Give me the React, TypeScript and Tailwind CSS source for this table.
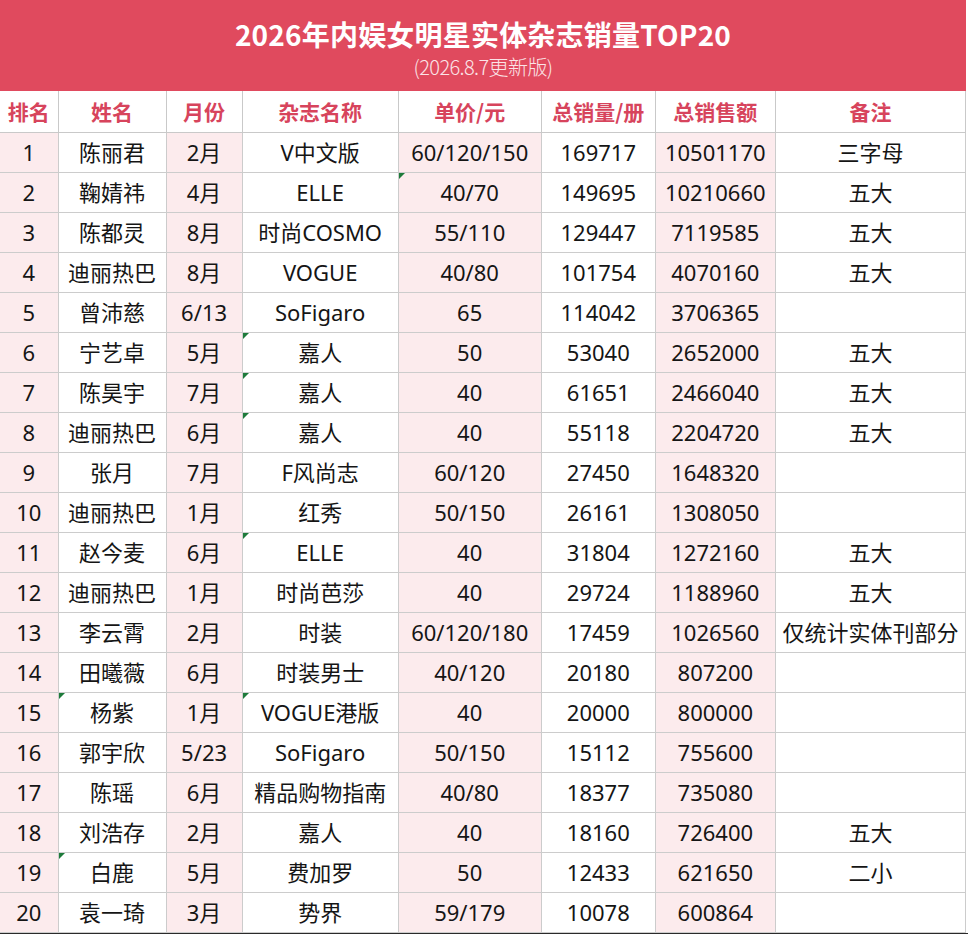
import React from "react";

// rank, name, month, magazine, price, copies, revenue, note, flagged columns
const rows: [string, string, string, string, string, string, string, string, number[]][] = [
    ["1", "陈丽君", "2月", "V中文版", "60/120/150", "169717", "10501170", "三字母", []],
    ["2", "鞠婧祎", "4月", "ELLE", "40/70", "149695", "10210660", "五大", [4]],
    ["3", "陈都灵", "8月", "时尚COSMO", "55/110", "129447", "7119585", "五大", []],
    ["4", "迪丽热巴", "8月", "VOGUE", "40/80", "101754", "4070160", "五大", []],
    ["5", "曾沛慈", "6/13", "SoFigaro", "65", "114042", "3706365", "", []],
    ["6", "宁艺卓", "5月", "嘉人", "50", "53040", "2652000", "五大", [3]],
    ["7", "陈昊宇", "7月", "嘉人", "40", "61651", "2466040", "五大", [3]],
    ["8", "迪丽热巴", "6月", "嘉人", "40", "55118", "2204720", "五大", [3]],
    ["9", "张月", "7月", "F风尚志", "60/120", "27450", "1648320", "", []],
    ["10", "迪丽热巴", "1月", "红秀", "50/150", "26161", "1308050", "", []],
    ["11", "赵今麦", "6月", "ELLE", "40", "31804", "1272160", "五大", [3]],
    ["12", "迪丽热巴", "1月", "时尚芭莎", "40", "29724", "1188960", "五大", []],
    ["13", "李云霄", "2月", "时装", "60/120/180", "17459", "1026560", "仅统计实体刊部分", []],
    ["14", "田曦薇", "6月", "时装男士", "40/120", "20180", "807200", "", []],
    ["15", "杨紫", "1月", "VOGUE港版", "40", "20000", "800000", "", [1, 3]],
    ["16", "郭宇欣", "5/23", "SoFigaro", "50/150", "15112", "755600", "", []],
    ["17", "陈瑶", "6月", "精品购物指南", "40/80", "18377", "735080", "", []],
    ["18", "刘浩存", "2月", "嘉人", "40", "18160", "726400", "五大", []],
    ["19", "白鹿", "5月", "费加罗", "50", "12433", "621650", "二小", [1]],
    ["20", "袁一琦", "3月", "势界", "59/179", "10078", "600864", "", []],
];

const headers = ["排名", "姓名", "月份", "杂志名称", "单价/元", "总销量/册", "总销售额", "备注"];
const widths = ["w-[58px]", "w-[108px]", "w-[76px]", "w-[156px]", "w-[143px]", "w-[114px]", "w-[120px]", "w-[190px]"];

export default function App() {
    return (
        <div className="w-[968px] h-[934px] bg-white overflow-hidden font-['Noto_Sans','Noto_Sans_CJK_SC',sans-serif]">
            <div className="w-[966px] h-[91px] bg-[#e04a5e] flex flex-col items-center">
                <h1 className="mt-[17px] text-[28px] leading-[34px] font-bold text-white tracking-[0.2px] font-['Noto_Sans_CJK_SC',sans-serif]">
                    2026年内娱女明星实体杂志销量TOP20
                </h1>
                <p className="mt-[4px] text-[20px] leading-[24px] text-[#fbe4e7] tracking-[-0.6px] font-light font-['Noto_Sans_CJK_SC',sans-serif]">
                    (2026.8.7更新版)
                </p>
            </div>

            <table className="table-fixed border-collapse w-[966px] text-[22px]">
                <thead>
                    <tr className="h-[41px]">
                        {headers.map((h, i) => (
                            <th
                                key={h}
                                className={`${widths[i]} border-r border-b border-[#c9c9c9] font-bold text-[#d7445c] text-center p-0 leading-none font-['Noto_Sans_CJK_SC',sans-serif] text-[21px]`}
                            >
                                {h}
                            </th>
                        ))}
                    </tr>
                </thead>
                <tbody>
                    {rows.map((r) => (
                        <tr key={r[0]} className="h-[40px]">
                            {r.slice(0, 8).map((c, i) => (
                                <td
                                    key={i}
                                    className={`relative p-0 text-center leading-none whitespace-nowrap text-[#151515] border-r border-b border-[#cccccc] ${
                                        i % 2 === 0 ? "bg-[#fcebed]" : "bg-white"
                                    }`}
                                >
                                    {(r[8] as number[]).includes(i) && (
                                        <span className="absolute left-0 top-0 w-0 h-0 border-t-[6px] border-r-[6px] border-t-[#1d7a3a] border-r-transparent" />
                                    )}
                                    {c as string}
                                </td>
                            ))}
                        </tr>
                    ))}
                </tbody>
            </table>
            <div className="w-[968px] h-[3px] bg-[#2a2a2a]" />
        </div>
    );
}
